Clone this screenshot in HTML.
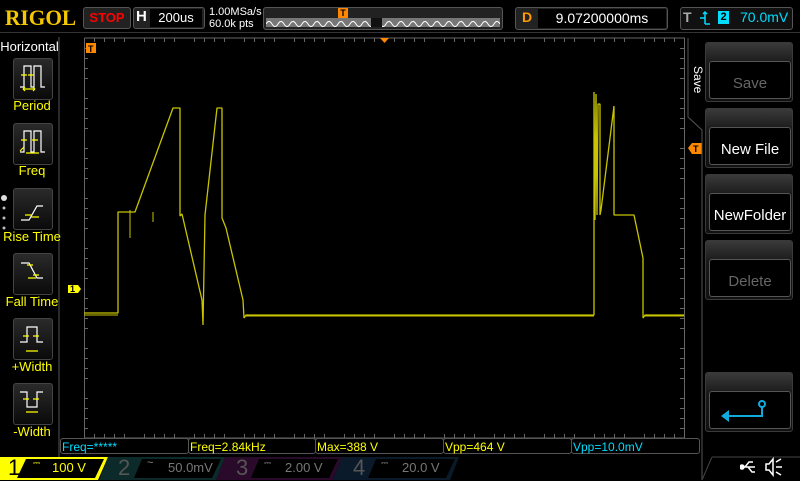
<!DOCTYPE html>
<html><head><meta charset="utf-8"><style>
body{margin:0;width:800px;height:480px;background:#000;overflow:hidden;font-family:"Liberation Sans",sans-serif;position:relative}
.a{position:absolute}
.lb{position:absolute;left:1px;width:62px;text-align:center;color:#ff0;font-size:13px}
.btn{position:absolute;left:13px;width:38px;height:40px;border:1px solid #444;border-radius:3px;background:linear-gradient(#2a2a2a,#0a0a0a)}
.rb{position:absolute;left:705px;width:86px;height:58px;border:1px solid #3a3a3a;border-radius:3px;background:linear-gradient(#3a3a3a,#1a1a1a 35%,#111)}
.rb div{position:absolute;left:3px;right:1px;top:18px;bottom:2px;border:1px solid #555;border-radius:3px;background:#000;color:#fff;font-size:15px;text-align:center;line-height:44px}
.m{position:absolute;top:438px;height:16px;border:1px solid #555;border-radius:3px;font-size:12px;line-height:16px;padding-left:1px;box-sizing:border-box}
.gv{position:absolute;top:38px;width:1px;height:400px;background:repeating-linear-gradient(#888 0 1px,#000 1px 5px)}
.gh{position:absolute;left:85px;height:1px;width:599px;background:repeating-linear-gradient(90deg,#888 0 1px,#000 1px 5px)}
</style></head><body>
<div class="a" style="left:5px;top:5px;font-family:'Liberation Serif',serif;font-weight:bold;font-size:22px;color:#f5c800;transform:scaleX(0.97);transform-origin:left">RIGOL</div>
<div class="a" style="left:83px;top:7px;width:46px;height:20px;border:1px solid #555;border-radius:3px;background:#222;color:#f00;font-weight:bold;font-size:13px;text-align:center;line-height:20px">STOP</div>
<div class="a" style="left:133px;top:7px;width:70px;height:20px;border:1px solid #555;border-radius:3px;background:#222"></div>
<div class="a" style="left:136px;top:8px;color:#fff;font-weight:bold;font-size:15px">H</div>
<div class="a" style="left:150px;top:9px;width:52px;height:18px;background:#000;color:#fff;font-size:13px;text-align:center;line-height:18px">200us</div>
<div class="a" style="left:209px;top:6px;color:#fff;font-size:11px;line-height:12px">1.00MSa/s<br>60.0k pts</div>
<div class="a" style="left:263px;top:7px;width:238px;height:21px;border:1px solid #555;border-radius:3px;background:#222"></div>
<div class="a" style="left:266px;top:18px;width:234px;height:9px;background:#777"></div>
<svg class="a" style="left:266px;top:18px" width="234" height="9"><path d="M0 6 q3 -5 6 0 t6 0 t6 0 t6 0 t6 0 t6 0 t6 0 t6 0 t6 0 t6 0 t6 0 t6 0 t6 0 t6 0 t6 0 t6 0 t6 0 t6 0 t6 0 t6 0 t6 0 t6 0 t6 0 t6 0 t6 0 t6 0 t6 0 t6 0 t6 0 t6 0 t6 0 t6 0 t6 0 t6 0 t6 0 t6 0 t6 0 t6 0 t6 0" stroke="#fff" fill="none" stroke-width="1"/><rect x="105" y="0" width="11" height="9" fill="#111"/></svg>
<div class="a" style="left:338px;top:8px;width:10px;height:10px;background:#f80;color:#000;font-size:9px;font-weight:bold;text-align:center;line-height:10px">T</div>
<div class="a" style="left:515px;top:7px;width:151px;height:21px;border:1px solid #555;border-radius:3px;background:#222"></div>
<div class="a" style="left:522px;top:9px;color:#f90;font-weight:bold;font-size:14px">D</div>
<div class="a" style="left:538px;top:9px;width:128px;height:19px;background:#000;color:#fff;font-size:14px;text-align:center;line-height:19px">9.07200000ms</div>
<div class="a" style="left:680px;top:7px;width:111px;height:21px;border:1px solid #555;border-radius:3px;background:#111"></div>
<div class="a" style="left:683px;top:9px;color:#aaa;font-weight:bold;font-size:14px">T</div>
<svg class="a" style="left:698px;top:10px" width="14" height="16"><path d="M2 8h5M7 2v12M5 4l2 -2l2 2M7 14h5" stroke="#0df" stroke-width="1.5" fill="none"/></svg>
<div class="a" style="left:718px;top:11px;width:11px;height:13px;background:#0df;color:#000;font-size:11px;font-weight:bold;text-align:center;line-height:13px">2</div>
<div class="a" style="left:740px;top:9px;color:#0df;font-size:14px">70.0mV</div>
<div class="a" style="left:0;top:32px;width:800px;height:1px;background:#333"></div>
<div class="gv" style="left:134px"></div><div class="gv" style="left:184px"></div><div class="gv" style="left:234px"></div><div class="gv" style="left:284px"></div><div class="gv" style="left:334px"></div><div class="gv" style="left:434px"></div><div class="gv" style="left:484px"></div><div class="gv" style="left:534px"></div><div class="gv" style="left:584px"></div><div class="gv" style="left:634px"></div>
<div class="gh" style="top:88px"></div><div class="gh" style="top:138px"></div><div class="gh" style="top:188px"></div><div class="gh" style="top:288px"></div><div class="gh" style="top:338px"></div><div class="gh" style="top:388px"></div>
<div class="a" style="left:384px;top:38px;width:1px;height:400px;background:repeating-linear-gradient(#999 0 1px,#000 1px 3px)"></div>
<div class="a" style="left:85px;top:238px;height:1px;width:599px;background:repeating-linear-gradient(90deg,#999 0 1px,#000 1px 3px)"></div>
<svg class="a" style="left:0;top:0" width="800" height="480" shape-rendering="crispEdges">
<g stroke="#888"><path d="M382 48.5h5M382 58.5h5M382 68.5h5M382 78.5h5M382 98.5h5M382 108.5h5M382 118.5h5M382 128.5h5M382 148.5h5M382 158.5h5M382 168.5h5M382 178.5h5M382 198.5h5M382 208.5h5M382 218.5h5M382 228.5h5M382 248.5h5M382 258.5h5M382 268.5h5M382 278.5h5M382 298.5h5M382 308.5h5M382 318.5h5M382 328.5h5M382 348.5h5M382 358.5h5M382 368.5h5M382 378.5h5M382 398.5h5M382 408.5h5M382 418.5h5M382 428.5h5"/>
<path d="M94.5 236v5M104.5 236v5M114.5 236v5M124.5 236v5M144.5 236v5M154.5 236v5M164.5 236v5M174.5 236v5M194.5 236v5M204.5 236v5M214.5 236v5M224.5 236v5M244.5 236v5M254.5 236v5M264.5 236v5M274.5 236v5M294.5 236v5M304.5 236v5M314.5 236v5M324.5 236v5M344.5 236v5M354.5 236v5M364.5 236v5M374.5 236v5M394.5 236v5M404.5 236v5M414.5 236v5M424.5 236v5M444.5 236v5M454.5 236v5M464.5 236v5M474.5 236v5M494.5 236v5M504.5 236v5M514.5 236v5M524.5 236v5M544.5 236v5M554.5 236v5M564.5 236v5M574.5 236v5M594.5 236v5M604.5 236v5M614.5 236v5M624.5 236v5M644.5 236v5M654.5 236v5M664.5 236v5M674.5 236v5"/></g>
<g stroke="#666" stroke-width="1"><path d="M84.5 38V438H684.5V38H84.5"/></g>
<g stroke="#666"><path d="M84 48.5h4M84 58.5h4M84 68.5h4M84 78.5h4M84 98.5h4M84 108.5h4M84 118.5h4M84 128.5h4M84 148.5h4M84 158.5h4M84 168.5h4M84 178.5h4M84 198.5h4M84 208.5h4M84 218.5h4M84 228.5h4M84 248.5h4M84 258.5h4M84 268.5h4M84 278.5h4M84 298.5h4M84 308.5h4M84 318.5h4M84 328.5h4M84 348.5h4M84 358.5h4M84 368.5h4M84 378.5h4M84 398.5h4M84 408.5h4M84 418.5h4M84 428.5h4"/>
<path d="M680 48.5h4M680 58.5h4M680 68.5h4M680 78.5h4M680 98.5h4M680 108.5h4M680 118.5h4M680 128.5h4M680 148.5h4M680 158.5h4M680 168.5h4M680 178.5h4M680 198.5h4M680 208.5h4M680 218.5h4M680 228.5h4M680 248.5h4M680 258.5h4M680 268.5h4M680 278.5h4M680 298.5h4M680 308.5h4M680 318.5h4M680 328.5h4M680 348.5h4M680 358.5h4M680 368.5h4M680 378.5h4M680 398.5h4M680 408.5h4M680 418.5h4M680 428.5h4"/>
<path d="M94.5 38v4M104.5 38v4M114.5 38v4M124.5 38v4M144.5 38v4M154.5 38v4M164.5 38v4M174.5 38v4M194.5 38v4M204.5 38v4M214.5 38v4M224.5 38v4M244.5 38v4M254.5 38v4M264.5 38v4M274.5 38v4M294.5 38v4M304.5 38v4M314.5 38v4M324.5 38v4M344.5 38v4M354.5 38v4M364.5 38v4M374.5 38v4M394.5 38v4M404.5 38v4M414.5 38v4M424.5 38v4M444.5 38v4M454.5 38v4M464.5 38v4M474.5 38v4M494.5 38v4M504.5 38v4M514.5 38v4M524.5 38v4M544.5 38v4M554.5 38v4M564.5 38v4M574.5 38v4M594.5 38v4M604.5 38v4M614.5 38v4M624.5 38v4M644.5 38v4M654.5 38v4M664.5 38v4M674.5 38v4"/>
<path d="M94.5 434v4M104.5 434v4M114.5 434v4M124.5 434v4M144.5 434v4M154.5 434v4M164.5 434v4M174.5 434v4M194.5 434v4M204.5 434v4M214.5 434v4M224.5 434v4M244.5 434v4M254.5 434v4M264.5 434v4M274.5 434v4M294.5 434v4M304.5 434v4M314.5 434v4M324.5 434v4M344.5 434v4M354.5 434v4M364.5 434v4M374.5 434v4M394.5 434v4M404.5 434v4M414.5 434v4M424.5 434v4M444.5 434v4M454.5 434v4M464.5 434v4M474.5 434v4M494.5 434v4M504.5 434v4M514.5 434v4M524.5 434v4M544.5 434v4M554.5 434v4M564.5 434v4M574.5 434v4M594.5 434v4M604.5 434v4M614.5 434v4M624.5 434v4M644.5 434v4M654.5 434v4M664.5 434v4M674.5 434v4"/></g>
</svg>
<svg class="a" style="left:0;top:0" width="800" height="480">
<g fill="none" stroke="#c8c400" stroke-width="1.3" stroke-linejoin="bevel">
<path d="M84 313H118V212H134L135 212L173 108H180V216L182 214L202 300L203 325L205 215L217 108H222V218L226 228L243 300L244 318L246 315H594V213L594 92L595 220L596 94L597 215L598 104H600V215L601 210L614 106V215H634L643 258V318L645 315H684"/>
</g>
<path d="M130 210v28M153 212v10M84 315h34M246 316h348M645 316h39" stroke="#c8c400"/>
<rect x="86" y="43" width="10" height="10" fill="#f80"/><text x="88" y="52" font-size="9" font-weight="bold" fill="#000" font-family="Liberation Sans">T</text>
<path d="M380 38h9l-4.5 5z" fill="#f80"/>
<path d="M688 148l4 -5h10v11h-10z" fill="#f80"/><text x="693" y="152" font-size="9" font-weight="bold" fill="#000" font-family="Liberation Sans">T</text>
<path d="M68 285h10l3 4l-3 4h-10z" fill="#ff0"/><text x="70" y="292" font-size="9" font-weight="bold" fill="#000" font-family="Liberation Sans">1</text>
<path d="M688 38V117L702 130V480" stroke="#555" fill="none"/>
<path d="M59 37V460" stroke="#555"/>
</svg>
<div class="a" style="left:0;top:38px;width:59px;height:18px;color:#fff;font-size:13px;text-align:center;line-height:18px">Horizontal</div>
<div class="btn" style="top:58px"></div><div class="lb" style="top:98px">Period</div>
<div class="btn" style="top:123px"></div><div class="lb" style="top:163px">Freq</div>
<div class="btn" style="top:188px"></div><div class="lb" style="top:229px">Rise Time</div>
<div class="btn" style="top:253px"></div><div class="lb" style="top:294px">Fall Time</div>
<div class="btn" style="top:318px"></div><div class="lb" style="top:359px">+Width</div>
<div class="btn" style="top:383px"></div><div class="lb" style="top:424px">-Width</div>
<svg class="a" style="left:0;top:0" width="60" height="440" fill="none" stroke-width="1.2">
<g stroke="#fff"><path d="M20 87h4V66h7v21h3V66h7v21h4"/><path d="M20 152h4V131h7v21h3V131h7v21h4"/><path d="M21 220h8l8 -14h6"/><path d="M21 263h8l8 15h6"/><path d="M20 342h7v-15h10v15h6"/><path d="M20 392h7v15h10v-15h6"/></g>
<g stroke="#ff0"><path d="M21 75h6M28 75h6M23 89h12M21 140h6M32 140h6M26 153h13M25 215h7M31 217h8M27 265h6M33 275h6M28 278h8M23 336h6M33 336h6M26 351h12M23 399h6M33 399h6M26 412h12"/><path d="M20 151l4 -4M23 89l2 -2M23 89l2 2M35 89l-2 -2M35 89l-2 2"/></g>
<g fill="#bbb" stroke="none"><circle cx="4" cy="198" r="3" fill="#ddd"/><circle cx="4" cy="208" r="1.5"/><circle cx="4" cy="218" r="1.5"/><circle cx="4" cy="228" r="1.5"/></g>
</svg>
<div class="a" style="top:66px;color:#fff;font-size:12px;transform:rotate(90deg);transform-origin:left top;left:705px">Save</div>
<div class="rb" style="top:42px"><div style="color:#666">Save</div></div>
<div class="rb" style="top:108px"><div>New File</div></div>
<div class="rb" style="top:174px"><div>NewFolder</div></div>
<div class="rb" style="top:240px"><div style="color:#666">Delete</div></div>
<div class="rb" style="top:372px"><div></div></div>
<svg class="a" style="left:705px;top:372px" width="88" height="60"><path d="M57 32v12H22" stroke="#1ad" stroke-width="2" fill="none"/><circle cx="57" cy="32" r="3" stroke="#1ad" fill="#000" stroke-width="2"/><path d="M16 44l8 -6v12z" fill="#1ad"/></svg>
<div class="m" style="left:60px;width:129px;color:#0df">Freq=*****</div>
<div class="m" style="left:188px;width:128px;color:#ff0">Freq=2.84kHz</div>
<div class="m" style="left:315px;width:129px;color:#ff0">Max=388 V</div>
<div class="m" style="left:443px;width:129px;color:#ff0">Vpp=464 V</div>
<div class="m" style="left:571px;width:129px;color:#0df">Vpp=10.0mV</div>
<svg class="a" style="left:0;top:455px" width="800" height="25">
<path d="M0 2H108L98 25H0z" fill="#ff0"/><path d="M26 4H104L95 23H17z" fill="#000"/>
<path d="M108 2H225L216 25H99z" fill="#0c2a2a"/><path d="M142 4H221L212 23H134z" fill="#000"/>
<path d="M225 2H342L333 25H216z" fill="#2a0a2a"/><path d="M259 4H338L329 23H251z" fill="#000"/>
<path d="M342 2H459L450 25H333z" fill="#0a1a2a"/><path d="M376 4H455L446 23H368z" fill="#000"/>
<path d="M712 2H800M712 2L702 25" stroke="#444" fill="none"/>
</svg>
<div class="a" style="left:8px;top:455px;color:#000;font-size:22px">1</div>
<div class="a" style="left:33px;top:458px;color:#ff0;font-size:9px">⎓</div>
<div class="a" style="left:52px;top:460px;color:#ff0;font-size:13px">100 V</div>
<div class="a" style="left:118px;top:455px;color:#555;font-size:22px">2</div>
<div class="a" style="left:147px;top:457px;color:#888;font-size:11px">~</div>
<div class="a" style="left:168px;top:460px;color:#777;font-size:13px">50.0mV</div>
<div class="a" style="left:236px;top:455px;color:#555;font-size:22px">3</div>
<div class="a" style="left:264px;top:458px;color:#888;font-size:9px">⎓</div>
<div class="a" style="left:285px;top:460px;color:#777;font-size:13px">2.00 V</div>
<div class="a" style="left:353px;top:455px;color:#555;font-size:22px">4</div>
<div class="a" style="left:381px;top:458px;color:#888;font-size:9px">⎓</div>
<div class="a" style="left:402px;top:460px;color:#777;font-size:13px">20.0 V</div>
<svg class="a" style="left:740px;top:457px" width="45" height="20" fill="none" stroke="#fff" stroke-width="1.5"><path d="M1 10h14M5 10l4 -5h4M8 10l4 5h3"/><circle cx="2" cy="10" r="2" fill="#fff"/><path d="M26 7h3l4 -5v16l-4 -5h-3zM36 5l5 -3M36 10h6M36 15l5 3"/></svg>
</body></html>
